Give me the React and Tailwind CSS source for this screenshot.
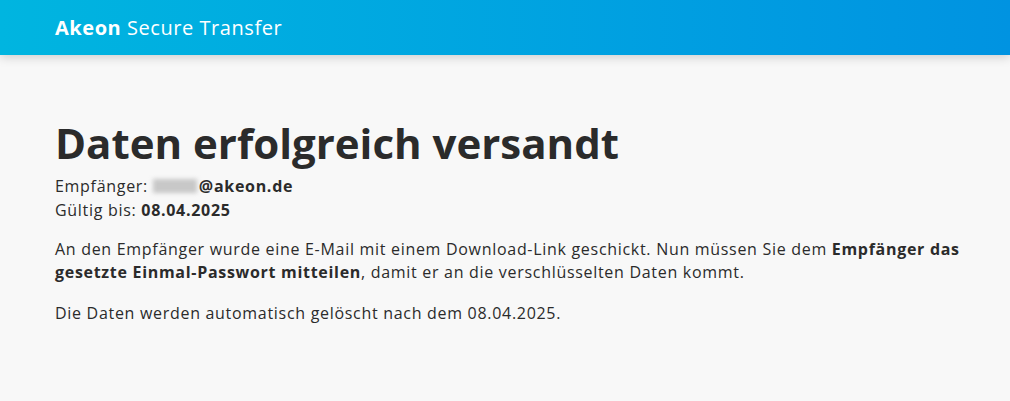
export default function App() {
  return (
    <div className="min-h-[401px] bg-[#f8f8f8] text-[#2b2b2b]" style={{ fontFamily: '"Open Sans", "Liberation Sans", sans-serif' }}>
      <header className="h-[55px] bg-gradient-to-r from-[#00b5e0] to-[#0093e1] shadow-[0_2px_10px_rgba(0,0,0,0.18)] flex items-center px-[55px]">
        <div className="text-white text-[20px] tracking-[0.55px]">
          <span className="font-bold">Akeon</span> Secure Transfer
        </div>
      </header>

      <main className="pl-[55px] pr-[20px] pt-[60px]">
        <h1 className="text-[42px] font-bold leading-[56px] mb-[3px]">Daten erfolgreich versandt</h1>
        <div className="text-[16px] leading-[24px] tracking-[0.7px]">
          <div>
            Empfänger:{" "}
            <span className="inline-block align-middle w-[44px] h-[14px] mr-[2px] bg-[#c8c8c8] blur-[2px] -mt-[3px]" />
            <span className="font-bold">@akeon.de</span>
          </div>
          <div>
            Gültig bis: <span className="font-bold">08.04.2025</span>
          </div>
        </div>
        <p className="text-[16px] leading-[23px] tracking-[0.7px] mt-[16px] max-w-[925px]">
          An den Empfänger wurde eine E-Mail mit einem Download-Link geschickt. Nun müssen Sie dem{" "}
          <span className="font-bold">Empfänger das gesetzte Einmal-Passwort mitteilen</span>, damit er an die verschlüsselten Daten kommt.
        </p>
        <p className="text-[16px] leading-[23px] tracking-[0.7px] mt-[18px]">Die Daten werden automatisch gelöscht nach dem 08.04.2025.</p>
      </main>
    </div>
  );
}
